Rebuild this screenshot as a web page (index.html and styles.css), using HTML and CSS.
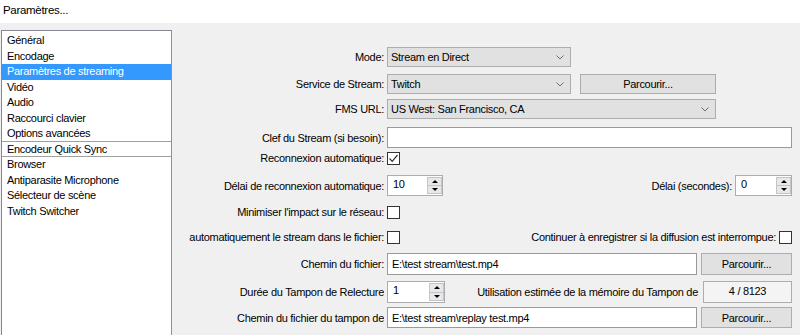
FILE: index.html
```html
<!DOCTYPE html>
<html lang="fr">
<head>
<meta charset="utf-8">
<title>Paramètres...</title>
<link rel="stylesheet" href="styles.css">
</head>
<body>
<div class="titlebar">Paramètres...</div>
<div class="main">
  <ul class="nav">
    <li>Général</li>
    <li>Encodage</li>
    <li class="sel">Paramètres de streaming</li>
    <li>Vidéo</li>
    <li>Audio</li>
    <li>Raccourci clavier</li>
    <li class="sep">Options avancées</li>
    <li class="sep">Encodeur Quick Sync</li>
    <li>Browser</li>
    <li>Antiparasite Microphone</li>
    <li>Sélecteur de scène</li>
    <li>Twitch Switcher</li>
  </ul>
  <div class="panel">
    <div class="row r-mode">
      <div class="label"><span>Mode:</span></div>
      <div class="field">
        <div class="combo w184"><span>Stream en Direct</span><svg class="chev" width="8" height="5" viewBox="0 0 8 5"><polyline points="0.5,0.5 4,4 7.5,0.5" fill="none" stroke="#6d6d6d" stroke-width="1"/></svg></div>
      </div>
    </div>
    <div class="row r-service">
      <div class="label"><span>Service de Stream:</span></div>
      <div class="field">
        <div class="combo w184"><span>Twitch</span><svg class="chev" width="8" height="5" viewBox="0 0 8 5"><polyline points="0.5,0.5 4,4 7.5,0.5" fill="none" stroke="#6d6d6d" stroke-width="1"/></svg></div>
        <div class="btn w136 ml9">Parcourir...</div>
      </div>
    </div>
    <div class="row r-fms">
      <div class="label"><span>FMS URL:</span></div>
      <div class="field">
        <div class="combo w329"><span>US West: San Francisco, CA</span><svg class="chev" width="8" height="5" viewBox="0 0 8 5"><polyline points="0.5,0.5 4,4 7.5,0.5" fill="none" stroke="#6d6d6d" stroke-width="1"/></svg></div>
      </div>
    </div>
    <div class="row r-clef">
      <div class="label"><span>Clef du Stream (si besoin):</span></div>
      <div class="field">
        <div class="edit wfull"></div>
      </div>
    </div>
    <div class="row r-reco">
      <div class="label"><span>Reconnexion automatique:</span></div>
      <div class="field">
        <div class="check"><svg width="11" height="11" viewBox="0 0 11 11"><polyline points="1.5,5.5 4.2,8.3 9.5,2" fill="none" stroke="#333" stroke-width="1.2"/></svg></div>
      </div>
    </div>
    <div class="row r-delai">
      <div class="label"><span>Délai de reconnexion automatique:</span></div>
      <div class="field">
        <div class="spin w56"><span class="val">10</span><div class="arrows"><div class="arr up"></div><div class="arr down"></div></div></div>
        <div class="grow"></div>
        <span class="rlabel">Délai (secondes):</span>
        <div class="spin w57"><span class="val">0</span><div class="arrows"><div class="arr up"></div><div class="arr down"></div></div></div>
      </div>
    </div>
    <div class="row r-min">
      <div class="label"><span>Minimiser l'impact sur le réseau:</span></div>
      <div class="field">
        <div class="check"></div>
      </div>
    </div>
    <div class="row r-auto">
      <div class="label"><span>automatiquement le stream dans le fichier:</span></div>
      <div class="field">
        <div class="check"></div>
        <div class="grow"></div>
        <span class="rlabel">Continuer à enregistrer si la diffusion est interrompue:</span>
        <div class="check"></div>
      </div>
    </div>
    <div class="row r-chemin">
      <div class="label"><span>Chemin du fichier:</span></div>
      <div class="field">
        <div class="edit w310"><span>E:\test stream\test.mp4</span></div>
        <div class="btn w91 ml4">Parcourir...</div>
      </div>
    </div>
    <div class="row r-duree">
      <div class="label"><span>Durée du Tampon de Relecture</span></div>
      <div class="field">
        <div class="spin w58"><span class="val">1</span><div class="arrows"><div class="arr up"></div><div class="arr down"></div></div></div>
        <div class="grow"></div>
        <span class="rlabel mr5">Utilisation estimée de la mémoire du Tampon de</span>
        <div class="readout w89">4 / 8123</div>
      </div>
    </div>
    <div class="row r-tampon">
      <div class="label"><span>Chemin du fichier du tampon de</span></div>
      <div class="field">
        <div class="edit w310"><span>E:\test stream\replay test.mp4</span></div>
        <div class="btn w91 ml4">Parcourir...</div>
      </div>
    </div>
  </div>
</div>
</body>
</html>
```
FILE: styles.css
```css
* { box-sizing: border-box; }
html, body { margin: 0; padding: 0; }
body {
  width: 800px;
  height: 335px;
  overflow: hidden;
  background: #f0f0f0;
  font-family: "Liberation Sans", Arial, sans-serif;
  font-size: 11px;
  letter-spacing: -0.3px;
  color: #000;
}
.titlebar {
  height: 23px;
  background: #fff;
  padding-left: 3px;
  line-height: 20px;
  font-size: 11.5px;
}
.main {
  display: flex;
  padding-top: 7px;
  height: 312px;
}
.nav {
  list-style: none;
  margin: 0 0 0 1px;
  padding: 2px 0 0 0;
  width: 171px;
  height: 305px;
  flex: none;
  background: #fff;
  border: 1px solid #828790;
  border-right-color: #8d9097;
  border-bottom: 0;
}
.nav li {
  height: 15.5px;
  line-height: 15px;
  padding-left: 5px;
  white-space: nowrap;
}
.nav li.sel {
  background: #3399ff;
  color: #fff;
}
.nav li.sep {
  border-bottom: 1px solid #a0a0a0;
}
.panel {
  flex: 1;
  display: flex;
  flex-direction: column;
  padding-right: 8px;
  min-width: 0;
}
.row {
  display: flex;
  align-items: center;
}
.label {
  width: 197px;
  flex: none;
  display: flex;
  justify-content: flex-end;
  overflow: hidden;
  white-space: nowrap;
  margin-left: 15px;
  margin-right: 3px;
}
.label span { flex: none; }
.field {
  flex: 1;
  display: flex;
  align-items: center;
  height: 100%;
}
.r-mode { margin-top: 17px; height: 20px; }
.r-service { margin-top: 7px; height: 20px; }
.r-fms { margin-top: 5px; height: 20px; }
.r-clef { margin-top: 8px; height: 21px; }
.r-reco { margin-top: 3px; height: 14px; }
.r-delai { margin-top: 10px; height: 21px; }
.r-min { margin-top: 9px; height: 14px; }
.r-auto { margin-top: 11px; height: 14px; }
.r-chemin { margin-top: 9px; height: 22px; }
.r-duree { margin-top: 6px; height: 22px; }
.r-tampon { margin-top: 4px; height: 21px; }

.combo {
  height: 100%;
  background: #e1e1e1;
  border: 1px solid #adadad;
  display: flex;
  align-items: center;
  padding-left: 3px;
  padding-right: 6px;
}
.combo span { flex: 1; }
.chev { flex: none; display: block; }
.btn {
  height: 100%;
  background: #e1e1e1;
  border: 1px solid #adadad;
  display: flex;
  align-items: center;
  justify-content: center;
}
.edit {
  height: 100%;
  background: #fff;
  border: 1px solid #9a9a9a;
  display: flex;
  align-items: center;
  padding-left: 4px;
}
.check {
  width: 13px;
  height: 13px;
  flex: none;
  background: #fff;
  border: 1px solid #333;
  display: flex;
  align-items: center;
  justify-content: center;
}
.check svg { display: block; }
.spin {
  height: 100%;
  background: #fff;
  border: 1px solid #abadb3;
  display: flex;
  align-items: flex-start;
  padding-left: 5px;
}
.spin .val { flex: 1; padding-top: 2px; }
.arrows {
  width: 15px;
  height: 100%;
  display: flex;
  flex-direction: column;
  padding: 1px 0 1px 0;
}
.arr {
  flex: 1;
  background: #e8e8e8;
  border: 1px solid #c4c4c4;
  display: flex;
  align-items: center;
  justify-content: center;
}
.arr.down { border-top: none; }
.arr::after {
  content: "";
  width: 0;
  height: 0;
  border-left: 3px solid transparent;
  border-right: 3px solid transparent;
}
.arr.up::after { border-bottom: 3px solid #000; }
.arr.down::after { border-top: 3px solid #000; }
.readout {
  height: 100%;
  background: #f4f4f4;
  border: 1px solid #adadad;
  display: flex;
  align-items: center;
  justify-content: center;
  padding-bottom: 2px;
}
.grow { flex: 1; }
.rlabel { white-space: nowrap; margin-right: 3px; }
.mr5 { margin-right: 5px; }
.ml9 { margin-left: 9px; }
.ml4 { margin-left: 4px; }
.w56 { width: 56px; }
.w57 { width: 57px; }
.w58 { width: 58px; }
.w89 { width: 89px; }
.w91 { width: 91px; }
.w136 { width: 136px; }
.w184 { width: 184px; }
.w310 { width: 310px; }
.w329 { width: 329px; }
.wfull { width: 100%; }
```
